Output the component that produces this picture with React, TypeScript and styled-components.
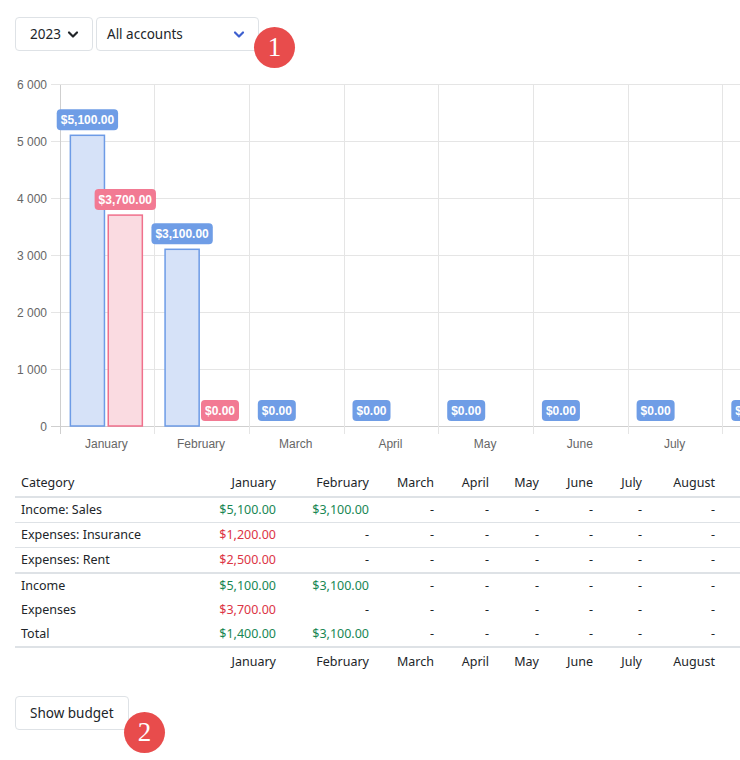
import styled, { createGlobalStyle } from 'styled-components';

const GlobalStyle = createGlobalStyle`
  html, body {
    margin: 0;
    padding: 0;
    background: #fff;
  }
  body {
    font-family: "Noto Sans", "DejaVu Sans", sans-serif;
    color: #212529;
    overflow: hidden;
  }
`;

const Page = styled.div`
  width: 740px;
  height: 760px;
  overflow: hidden;
  position: relative;
`;

const Toolbar = styled.div`
  display: flex;
  gap: 3px;
  margin: 17px 0 0 15px;
  position: relative;
`;

const Select = styled.div<{ $width: number; $padLeft: number }>`
  box-sizing: border-box;
  width: ${(p) => p.$width}px;
  height: 34px;
  border: 1px solid #dee2e6;
  border-radius: 4px;
  display: flex;
  align-items: center;
  justify-content: space-between;
  padding: 0 13px 0 ${(p) => p.$padLeft}px;
  font-size: 13.5px;
  color: #212529;
`;

const Badge = styled.div<{ $x: number; $y: number }>`
  position: absolute;
  left: ${(p) => p.$x}px;
  top: ${(p) => p.$y}px;
  width: 41px;
  height: 41px;
  border-radius: 50%;
  background: #e84c4c;
  color: #fff;
  font-family: "Liberation Serif", "DejaVu Serif", serif;
  font-size: 27px;
  line-height: 41px;
  text-align: center;
  z-index: 2;
`;

const ChartBox = styled.div`
  margin-top: 19px;
  height: 390px;
  overflow: hidden;
`;

const Table = styled.table`
  margin: 10px 0 0 15px;
  border-collapse: separate;
  border-spacing: 0;
  table-layout: fixed;
  width: 725px;
  font-size: 12.5px;
`;

const Cell = styled.td<{ $align?: 'left' | 'right'; $tone?: 'pos' | 'neg'; $border?: 0 | 1 | 2 }>`
  padding: 0 6px;
  line-height: 24px;
  height: 24px;
  white-space: nowrap;
  text-align: ${(p) => p.$align ?? 'right'};
  color: ${(p) => (p.$tone === 'pos' ? '#198754' : p.$tone === 'neg' ? '#dc3545' : '#212529')};
  border-bottom: ${(p) => (p.$border ? `${p.$border}px solid #dee2e6` : 'none')};
  font-weight: 400;
`;

const HeadCell = styled(Cell).attrs({ as: 'th' })`
  line-height: 26px;
  height: 26px;
`;

const FootCell = styled(HeadCell)`
  line-height: 27px;
  height: 27px;
`;

const Button = styled.button`
  margin: 21px 0 0 15px;
  box-sizing: border-box;
  height: 34px;
  padding: 0 14px;
  background: #fff;
  border: 1px solid #dee2e6;
  border-radius: 4px;
  font-family: "Noto Sans", sans-serif;
  font-size: 13.5px;
  color: #212529;
`;

const ButtonRow = styled.div`
  position: relative;
`;

function Chevron({ color }: { color: string }) {
  return (
    <svg width="12" height="12" viewBox="0 0 12 12">
      <path d="M2 4.5 L6 8.5 L10 4.5" fill="none" stroke={color} strokeWidth="2.2" strokeLinecap="round" strokeLinejoin="round" />
    </svg>
  );
}

const MONTHS = ['January', 'February', 'March', 'April', 'May', 'June', 'July', 'August'];
const INCOME = [5100, 3100, 0, 0, 0, 0, 0, 0];
const EXPENSE = [3700, 0, 0, 0, 0, 0, 0, 0];

const X0 = 59;
const CAT = 94.7;
const Y0 = 426;
const PER = 57; // px per 1000
const TOP = 70;

const money = (v: number) =>
  '$' + v.toLocaleString('en-US', { minimumFractionDigits: 2, maximumFractionDigits: 2 });

function labelWidth(s: string) {
  let w = 0;
  for (const ch of s) w += ch === ',' || ch === '.' ? 3.33 : 6.67;
  return w + 8;
}

function ValueLabel({ cx, top, text, fill }: { cx: number; top: number; text: string; fill: string }) {
  const w = labelWidth(text);
  const y = top - 5 - 21;
  return (
    <g>
      <rect x={cx - w / 2} y={y} width={w} height={21} rx={4} fill={fill} />
      <text x={cx} y={y + 15} textAnchor="middle" fill="#fff" fontSize="12" fontWeight="700" fontFamily="Liberation Sans, Arial, sans-serif">
        {text}
      </text>
    </g>
  );
}

function Chart() {
  const slot = (CAT * 0.8) / 2;
  const bw = slot * 0.9;
  const ticks = [0, 1000, 2000, 3000, 4000, 5000, 6000];
  return (
    <svg width="740" height="390" style={{ display: 'block' }}>
      <g transform={`translate(0, ${-TOP})`} fontFamily="Liberation Sans, Arial, sans-serif">
        {ticks.map((t) => {
          const y = Y0 - (t / 1000) * PER + 0.5;
          return (
            <g key={t}>
              <line x1={51} x2={740} y1={y} y2={y} stroke={t === 0 ? '#cfcfcf' : '#e5e5e5'} strokeWidth="1" />
              <text x={47} y={y + 4} textAnchor="end" fontSize="12" fill="#666">
                {t === 0 ? '0' : `${t / 1000} 000`}
              </text>
            </g>
          );
        })}
        {MONTHS.map((m, i) => {
          const x = X0 + i * CAT + 0.5;
          const cx = X0 + i * CAT + CAT / 2;
          return (
            <g key={m}>
              <line x1={Math.round(x) + 0.5} x2={Math.round(x) + 0.5} y1={85} y2={434} stroke={i === 0 ? '#cfcfcf' : '#e5e5e5'} />
              {cx < 720 && (
                <text x={cx} y={448} textAnchor="middle" fontSize="12" fill="#666">
                  {m}
                </text>
              )}
            </g>
          );
        })}
        {MONTHS.map((m, i) => {
          const start = X0 + i * CAT + CAT * 0.1;
          const cxA = start + slot / 2;
          const cxB = start + slot + slot / 2;
          const hA = (INCOME[i] / 1000) * PER;
          const hB = (EXPENSE[i] / 1000) * PER;
          return (
            <g key={m + 'bars'}>
              {hA > 0 && (
                <rect x={cxA - bw / 2} y={Y0 - hA} width={bw} height={hA} fill="#d6e2f8" stroke="#6d9be6" strokeWidth="1.5" />
              )}
              {hB > 0 && (
                <rect x={cxB - bw / 2} y={Y0 - hB} width={bw} height={hB} fill="#fadbe1" stroke="#f0708c" strokeWidth="1.5" />
              )}
            </g>
          );
        })}
        {MONTHS.map((m, i) => {
          const start = X0 + i * CAT + CAT * 0.1;
          const cxA = start + slot / 2;
          const cxB = start + slot + slot / 2;
          const hA = (INCOME[i] / 1000) * PER;
          const hB = (EXPENSE[i] / 1000) * PER;
          return (
            <g key={m + 'labels'}>
              <ValueLabel cx={cxA} top={Y0 - hA} text={money(INCOME[i])} fill="#6f9de6" />
              {i < 2 && <ValueLabel cx={cxB} top={Y0 - hB} text={money(EXPENSE[i])} fill="#f27a93" />}
            </g>
          );
        })}
      </g>
    </svg>
  );
}

const COL_WIDTHS = [177, 90, 93, 65, 55, 50, 54, 49, 73, 19];

type Row = { name: string; values: (number | null)[]; tone: 'pos' | 'neg' };

const CATEGORY_ROWS: Row[] = [
  { name: 'Income: Sales', values: [5100, 3100], tone: 'pos' },
  { name: 'Expenses: Insurance', values: [1200, null], tone: 'neg' },
  { name: 'Expenses: Rent', values: [2500, null], tone: 'neg' },
];

const TOTAL_ROWS: Row[] = [
  { name: 'Income', values: [5100, 3100], tone: 'pos' },
  { name: 'Expenses', values: [3700, null], tone: 'neg' },
  { name: 'Total', values: [1400, 3100], tone: 'pos' },
];

function ValueCells({ row, border }: { row: Row; border: 0 | 1 | 2 }) {
  return (
    <>
      {MONTHS.map((m, i) => {
        const v = row.values[i];
        return (
          <Cell key={m} $border={border} $tone={v != null ? row.tone : undefined}>
            {v != null ? money(v) : '-'}
          </Cell>
        );
      })}
      <Cell $border={border} />
    </>
  );
}

export default function App() {
  return (
    <Page>
      <GlobalStyle />
      <Toolbar>
        <Select $width={78} $padLeft={14}>
          2023
          <Chevron color="#212529" />
        </Select>
        <Select $width={163} $padLeft={10}>
          All accounts
          <Chevron color="#3d5fcf" />
        </Select>
        <Badge $x={239} $y={10}>1</Badge>
      </Toolbar>

      <ChartBox>
        <Chart />
      </ChartBox>

      <Table>
        <colgroup>
          {COL_WIDTHS.map((w, i) => (
            <col key={i} style={{ width: w }} />
          ))}
        </colgroup>
        <thead>
          <tr>
            <HeadCell $align="left" $border={2}>Category</HeadCell>
            {MONTHS.map((m) => (
              <HeadCell key={m} $border={2}>{m}</HeadCell>
            ))}
            <HeadCell $border={2} />
          </tr>
        </thead>
        <tbody>
          {CATEGORY_ROWS.map((r, idx) => (
            <tr key={r.name}>
              <Cell $align="left" $border={idx === 2 ? 2 : 1}>{r.name}</Cell>
              <ValueCells row={r} border={idx === 2 ? 2 : 1} />
            </tr>
          ))}
          {TOTAL_ROWS.map((r, idx) => (
            <tr key={r.name}>
              <Cell $align="left" $border={idx === 2 ? 2 : 0}>{r.name}</Cell>
              <ValueCells row={r} border={idx === 2 ? 2 : 0} />
            </tr>
          ))}
        </tbody>
        <tfoot>
          <tr>
            <FootCell $align="left" />
            {MONTHS.map((m) => (
              <FootCell key={m}>{m}</FootCell>
            ))}
            <FootCell />
          </tr>
        </tfoot>
      </Table>

      <ButtonRow>
        <Button type="button">Show budget</Button>
        <Badge $x={124} $y={37}>2</Badge>
      </ButtonRow>
    </Page>
  );
}
